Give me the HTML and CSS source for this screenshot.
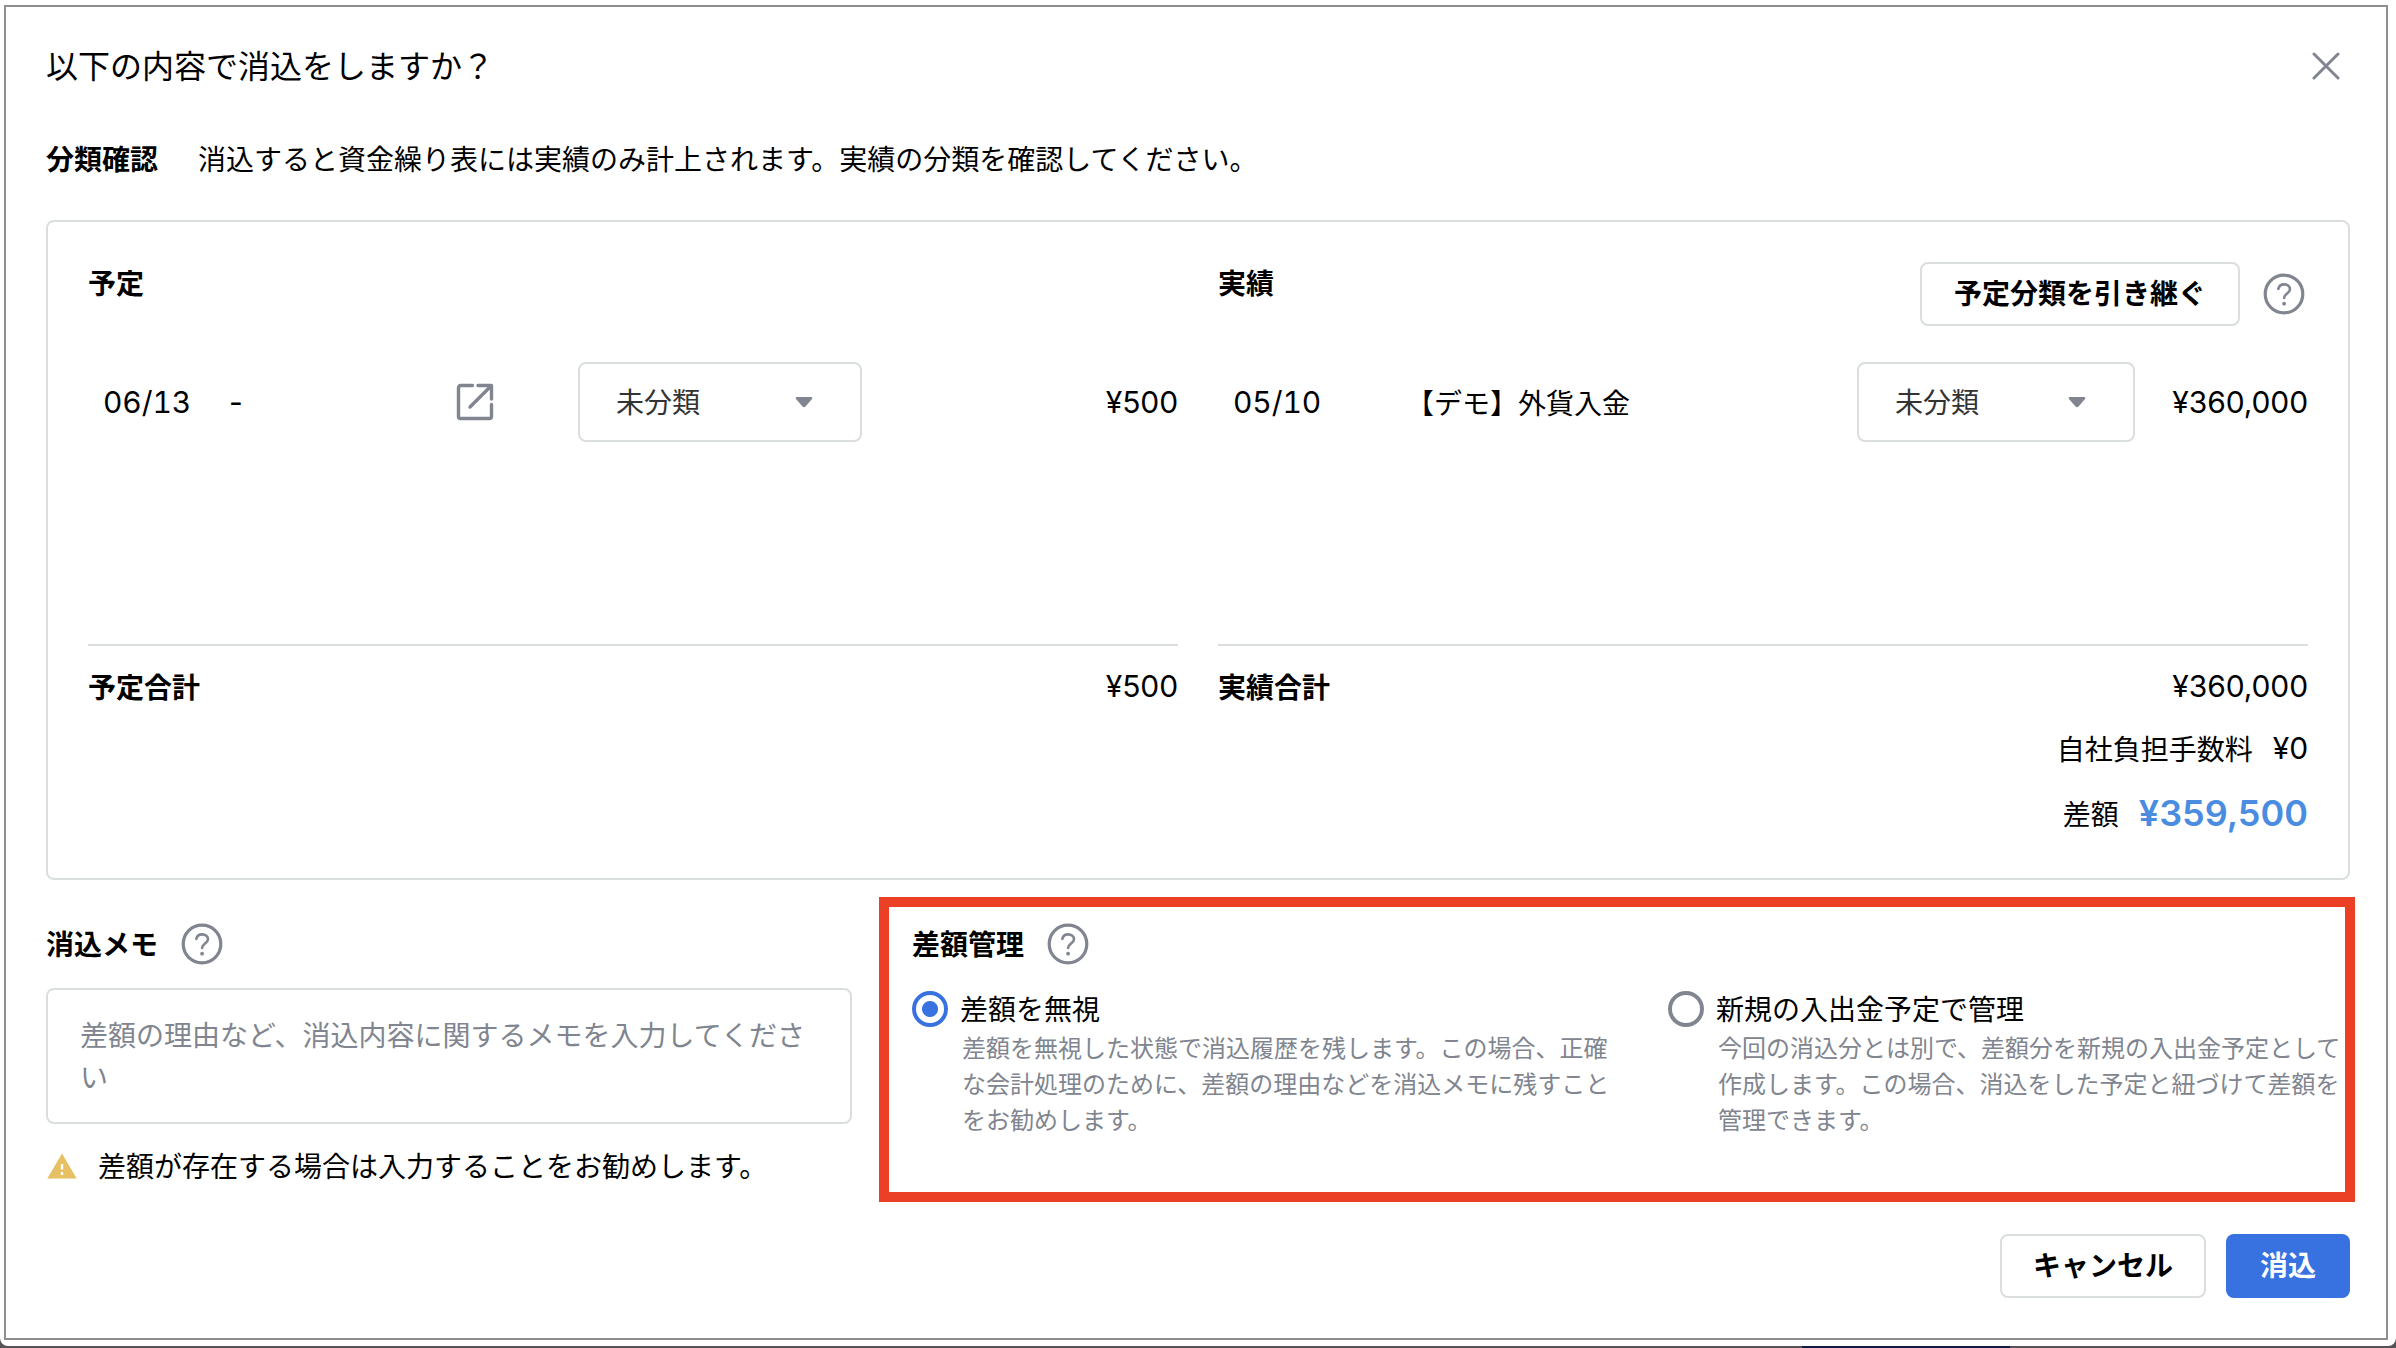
FILE: index.html
```html
<!DOCTYPE html>
<html lang="ja">
<head>
    <meta charset="UTF-8">
    <title>消込</title>
    <link rel="stylesheet" href="styles.css">
</head>
<body>
    <svg class="sprite">
        <symbol id="help" viewBox="0 0 48 48">
            <circle cx="24" cy="24" r="18.8" stroke-width="3.2"/>
            <path d="M18.3 18.8c.8-2.900 2.900-4.400 5.800-4.400 3.400 0 5.900 2 5.900 4.900 0 4.100-5.900 4.400-5.900 8.600" stroke-width="2.6"/>
            <circle cx="24.1" cy="33.700" r="1.9" fill="#80858f" stroke="none"/>
        </symbol>
    </svg>
    <div class="modal">
        <div class="modal-frame">
            <div class="modal-header">
                <h1>以下の内容で消込をしますか？</h1>
                <svg class="close" viewBox="0 0 28 28"><path d="M2 2l24 24M26 2L2 26"/></svg>
            </div>
            <div class="lead">
                <strong>分類確認</strong>
                <span>消込すると資金繰り表には実績のみ計上されます。実績の分類を確認してください。</span>
            </div>

            <div class="card">
                <div class="column">
                    <div class="column-head"><h2>予定</h2></div>
                    <div class="row plan-row">
                        <span class="num date">06/13</span>
                        <span class="num">-</span>
                        <svg class="open" viewBox="0 0 38 38">
                            <path d="M16.5 2.5H4.5a2 2 0 0 0-2 2v29a2 2 0 0 0 2 2h29a2 2 0 0 0 2-2V21.5M22 2.5h13.5V16M35 3L14 24"/>
                        </svg>
                        <div class="select">未分類<svg class="arrow" viewBox="0 0 18 12"><path d="M2 1h14q2 0 1 2l-6.500 7.500q-1.500 1.500-3 0L1 3q-1-2 1-2z"/></svg></div>
                        <span class="num amount">¥500</span>
                    </div>
                    <div class="total"><h2>予定合計</h2><span class="num">¥500</span></div>
                </div>
                <div class="column">
                    <div class="column-head">
                        <h2>実績</h2>
                        <div class="inherit">
                            <button class="button">予定分類を引き継ぐ</button>
                            <svg class="help"><use href="#help"/></svg>
                        </div>
                    </div>
                    <div class="row actual-row">
                        <span class="num date">05/10</span>
                        <span>【デモ】外貨入金</span>
                        <div class="select">未分類<svg class="arrow" viewBox="0 0 18 12"><path d="M2 1h14q2 0 1 2l-6.500 7.500q-1.500 1.500-3 0L1 3q-1-2 1-2z"/></svg></div>
                        <span class="num amount">¥360,000</span>
                    </div>
                    <div class="total"><h2>実績合計</h2><span class="num">¥360,000</span></div>
                    <div class="sub-total"><span>自社負担手数料</span><span class="num">¥0</span></div>
                    <div class="sub-total difference"><span>差額</span><span class="num diff-amount">¥359,500</span></div>
                </div>
            </div>

            <div class="bottom">
                <div class="memo">
                    <div class="label"><h2>消込メモ</h2><svg class="help"><use href="#help"/></svg></div>
                    <div class="textarea">差額の理由など、消込内容に関するメモを入力してください</div>
                    <div class="warning">
                        <svg viewBox="0 0 30 26"><path d="M15 .5L29.700 25.500H.3z" fill="#e6c063"/><path d="M15 11v5.500M15 19v3" stroke="#fff" stroke-width="2.400" stroke-linecap="butt"/></svg>
                        <span>差額が存在する場合は入力することをお勧めします。</span>
                    </div>
                </div>
                <div class="manage">
                    <div class="label"><h2>差額管理</h2><svg class="help"><use href="#help"/></svg></div>
                    <div class="options">
                        <div class="option">
                            <span class="radio checked"></span>
                            <div>
                                <div class="option-title">差額を無視</div>
                                <p>差額を無視した状態で消込履歴を残します。この場合、正確な会計処理のために、差額の理由などを消込メモに残すことをお勧めします。</p>
                            </div>
                        </div>
                        <div class="option">
                            <span class="radio"></span>
                            <div>
                                <div class="option-title">新規の入出金予定で管理</div>
                                <p>今回の消込分とは別で、差額分を新規の入出金予定として作成します。この場合、消込をした予定と紐づけて差額を管理できます。</p>
                            </div>
                        </div>
                    </div>
                </div>
            </div>

            <div class="footer">
                <button class="button">キャンセル</button>
                <button class="button primary">消込</button>
            </div>
        </div>
    </div>
    <div class="backdrop"></div>
</body>
</html>
```

FILE: styles.css
```css
* {
    box-sizing: border-box;
}
body {
    margin: 0;
    height: 1348px;
    overflow: hidden;
    background-color: #555355;
    color: #000;
    font-family: "Noto Sans CJK JP", sans-serif;
    font-size: 28px;
    line-height: 40px;
}
h1, h2, p {
    margin: 0;
}
h1 {
    font-size: 32px;
    font-weight: 400;
    padding-bottom: 4px;
}
h2 {
    font-size: 28px;
    font-weight: 700;
}
svg {
    display: block;
    flex: none;
    fill: none;
    stroke: #80858f;
    stroke-linecap: round;
    stroke-linejoin: round;
}
.sprite {
    display: none;
}
.modal {
    height: 1346px;
    padding: 5px 8px 6px 4px;
    background-color: #fff;
    border-radius: 0 0 8px 8px;
}
.modal-frame {
    height: 1335px;
    padding: 39px 36px 0 40px;
    border: 2px solid #8f8f8f;
}
.modal-header {
    display: flex;
    justify-content: space-between;
    align-items: center;
    height: 40px;
    padding-right: 10px;
}
.close {
    width: 28px;
    height: 28px;
    stroke-width: 3;
}
.lead {
    display: flex;
    gap: 40px;
    margin-top: 52px;
}
.num {
    font-family: Inter, "Noto Sans CJK JP", sans-serif;
    font-size: 30px;
    letter-spacing: -0.1px;
    white-space: nowrap;
}
.date {
    font-variant-numeric: tabular-nums;
}

/* plan / actual table */
.card {
    display: grid;
    grid-template-columns: 1090px 1090px;
    gap: 40px;
    height: 660px;
    margin-top: 42px;
    padding: 40px;
    border: 2px solid #dadfde;
    border-radius: 8px;
}
.column-head {
    display: flex;
    justify-content: space-between;
    height: 64px;
}
.inherit {
    display: flex;
    align-items: center;
    gap: 20px;
}
.help {
    width: 48px;
    height: 48px;
}
.button {
    height: 64px;
    padding: 0 32px 5px;
    border: 2px solid #dadfde;
    border-radius: 8px;
    background-color: #fff;
    color: #000;
    font-family: inherit;
    font-size: 28px;
    font-weight: 700;
    white-space: nowrap;
}
.row {
    display: grid;
    align-items: center;
    height: 80px;
    margin: 36px 0 202px;
    padding-left: 15px;
}
.plan-row {
    grid-template-columns: 126px 227px 122px 284px 1fr;
}
.actual-row {
    grid-template-columns: 173px 451px 278px 1fr;
}
.open {
    width: 38px;
    height: 38px;
    stroke-width: 3.4;
}
.select {
    display: flex;
    justify-content: space-between;
    align-items: center;
    height: 80px;
    padding: 0 47px 2px 36px;
    border: 2px solid #dadfde;
    border-radius: 8px;
    color: #333;
}
.arrow {
    width: 18px;
    height: 12px;
    margin-top: 2px;
    fill: #80858f;
    stroke: none;
}
.amount {
    text-align: right;
}
.total {
    display: flex;
    justify-content: space-between;
    padding-top: 20px;
    border-top: 2px solid #dadfde;
}
.sub-total {
    display: flex;
    justify-content: flex-end;
    align-items: center;
    gap: 20px;
    margin-top: 22px;
}
.difference {
    margin-top: 25px;
}
.diff-amount {
    color: #4a8cdf;
    font-size: 36px;
    font-weight: 600;
    letter-spacing: 0;
}

/* memo and difference handling */
.bottom {
    display: grid;
    grid-template-columns: 806px 1476px;
    gap: 27px;
    height: 322px;
}
.memo {
    padding-top: 40px;
}
.label {
    display: flex;
    align-items: center;
    gap: 20px;
    height: 48px;
}
.label h2 {
    padding-bottom: 2px;
}
.textarea {
    height: 136px;
    margin-top: 20px;
    padding: 23px 32px;
    border: 2px solid #dadfde;
    border-radius: 8px;
    color: #80858f;
    line-height: 42px;
}
.warning {
    display: flex;
    align-items: center;
    gap: 21px;
    margin-top: 21px;
    padding-left: 1px;
}
.warning svg {
    width: 30px;
    height: 26px;
    stroke: none;
}
.warning span {
    padding-bottom: 2px;
}
.manage {
    height: 305px;
    margin-top: 17px;
    padding: 13px 0 0 23px;
    border: 10px solid #eb4025;
}
.options {
    display: grid;
    grid-template-columns: 700px 677px;
    gap: 56px;
    margin-top: 20px;
}
.option {
    display: flex;
    gap: 12px;
}
.option p {
    width: 650px;
    padding-left: 2px;
    color: #80858f;
    font-size: 24px;
    line-height: 36px;
}
.option:last-child p {
    width: 630px;
}
.option-title {
    height: 41px;
}
.radio {
    flex: none;
    width: 36px;
    height: 36px;
    margin-top: 3px;
    border: 4px solid #80858f;
    border-radius: 50%;
}
.checked {
    border-color: #3871e0;
    background: radial-gradient(circle, #3871e0 7.5px, #fff 8.500px);
}
.footer {
    display: flex;
    justify-content: flex-end;
    gap: 20px;
    margin-top: 32px;
}
.footer .button {
    padding: 0 31px 5px;
}
.footer .primary {
    padding: 0 34px 5px;
    border: none;
    background-color: #3871e0;
    color: #fff;
}
.backdrop {
    width: 208px;
    height: 2px;
    margin-left: 1802px;
    background-color: #101b45;
}
```
